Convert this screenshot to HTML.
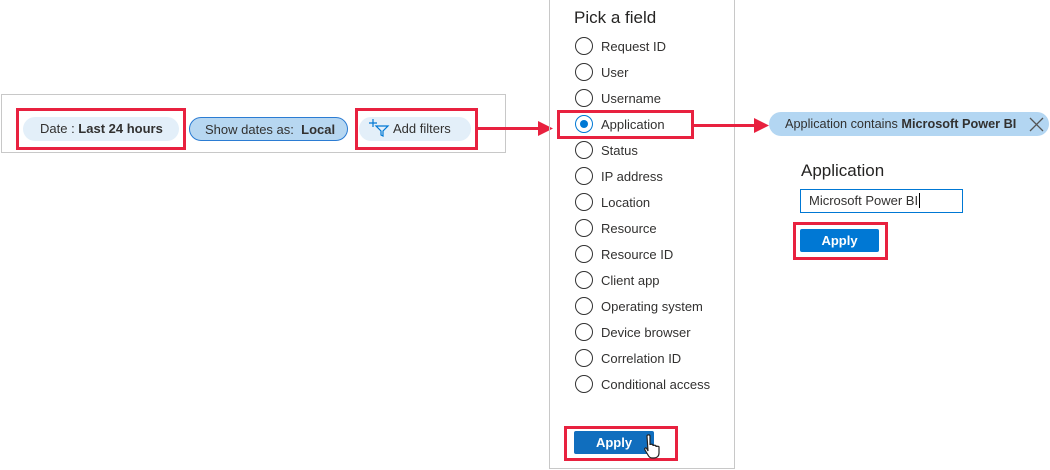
<!DOCTYPE html>
<html><head><meta charset="utf-8"><style>
body{margin:0;width:1050px;height:470px;background:#fff;position:relative;overflow:hidden;font-family:"Liberation Sans",sans-serif;color:#323130}
.a{position:absolute}
.pill{position:absolute;height:24px;border-radius:12px;font-size:13px;line-height:24px;box-sizing:border-box}
.red{position:absolute;border:3px solid #e8213f;box-sizing:border-box}
.rad{position:absolute;left:575px;width:18px;height:18px;border:1.5px solid #333;border-radius:50%;box-sizing:border-box}
.lab{position:absolute;left:601px;font-size:13px;line-height:16px}
.btn{position:absolute;color:#fff;font-weight:bold;font-size:13px;text-align:center;border-radius:2px}
</style></head><body>
<div class="a" style="left:1px;top:94px;width:505px;height:59px;border:1px solid #c8c8c8;box-sizing:border-box"></div>
<div class="pill" style="left:23px;top:117px;width:156px;background:#e3eff9;padding-left:17px">Date : <b>Last 24 hours</b></div>
<div class="red" style="left:16px;top:108px;width:170px;height:42px"></div>
<div class="pill" style="left:189px;top:117px;width:159px;background:#b7d7f1;border:1px solid #2b7cd3;padding-left:15px">Show dates as:&nbsp; <b>Local</b></div>
<div class="pill" style="left:359px;top:117px;width:112px;background:#e3eff9;padding-left:34px">Add filters</div>
<svg class="a" style="left:368px;top:118px" width="22" height="20"><path d="M1 5h8M5 1v8" stroke="#0078d4" stroke-width="1.2" fill="none"/><path d="M8 8h12l-5 5v5l-2 -1v-4z" stroke="#0078d4" stroke-width="1.2" fill="none"/></svg>
<div class="red" style="left:355px;top:108px;width:123px;height:42px"></div>
<div class="a" style="left:478px;top:127px;width:64px;height:3px;background:#e8213f"></div>
<svg class="a" style="left:538px;top:121px" width="16" height="15"><path d="M0 0L15 7.5L0 15z" fill="#e8213f"/></svg>

<div class="a" style="left:549px;top:-1px;width:186px;height:470px;border:1px solid #c8c8c8;box-sizing:border-box"></div>
<div class="a" style="left:574px;top:8px;font-size:17px;color:#252423">Pick a field</div>
<div class="rad" style="top:37px"></div><div class="lab" style="top:39px">Request ID</div>
<div class="rad" style="top:63px"></div><div class="lab" style="top:65px">User</div>
<div class="rad" style="top:89px"></div><div class="lab" style="top:91px">Username</div>
<div class="rad" style="top:115px;border-color:#0078d4"></div><div class="a" style="left:580px;top:120px;width:8px;height:8px;border-radius:50%;background:#0078d4"></div><div class="lab" style="top:117px">Application</div>
<div class="rad" style="top:141px"></div><div class="lab" style="top:143px">Status</div>
<div class="rad" style="top:167px"></div><div class="lab" style="top:169px">IP address</div>
<div class="rad" style="top:193px"></div><div class="lab" style="top:195px">Location</div>
<div class="rad" style="top:219px"></div><div class="lab" style="top:221px">Resource</div>
<div class="rad" style="top:245px"></div><div class="lab" style="top:247px">Resource ID</div>
<div class="rad" style="top:271px"></div><div class="lab" style="top:273px">Client app</div>
<div class="rad" style="top:297px"></div><div class="lab" style="top:299px">Operating system</div>
<div class="rad" style="top:323px"></div><div class="lab" style="top:325px">Device browser</div>
<div class="rad" style="top:349px"></div><div class="lab" style="top:351px">Correlation ID</div>
<div class="rad" style="top:375px"></div><div class="lab" style="top:377px">Conditional access</div>
<div class="red" style="left:557px;top:110px;width:137px;height:29px"></div>
<div class="a" style="left:694px;top:124px;width:62px;height:3px;background:#e8213f"></div>
<svg class="a" style="left:754px;top:118px" width="15" height="15"><path d="M0 0L15 7.5L0 15z" fill="#e8213f"/></svg>

<div class="btn" style="left:574px;top:431px;width:80px;height:23px;line-height:23px;background:#106ebe">Apply</div>
<div class="red" style="left:564px;top:426px;width:114px;height:35px"></div>
<svg class="a" style="left:643px;top:434px" width="22" height="28"><path d="M4 2c0-1.5 3-1.5 3 0v9c0-1 3-1 3 0v1c0-1 3-1 3 0v1c0-1 3-1 3 0v6c0 3-2 5-5 5h-2c-2 0-3-1-4-3l-3-5c-1-2 1-3 2-1l1 2z" fill="#fff" stroke="#222" stroke-width="1.2"/></svg>

<div class="pill" style="left:769px;top:112px;width:280px;background:#b3d6f2;padding-left:16px;color:#323130;font-size:12.7px">Application contains <b>Microsoft Power BI</b></div>
<svg class="a" style="left:1029px;top:117px" width="15" height="15"><path d="M1 1L14 14M14 1L1 14" stroke="#555" stroke-width="1.3"/></svg>
<div class="a" style="left:801px;top:161px;font-size:17px;color:#252423">Application</div>
<div class="a" style="left:800px;top:189px;width:163px;height:24px;border:1.5px solid #0078d4;box-sizing:border-box;font-size:13px;line-height:21px;padding-left:8px">Microsoft Power BI<span style="border-left:1px solid #000;margin-left:1px"></span></div>
<div class="btn" style="left:800px;top:229px;width:79px;height:23px;line-height:23px;background:#0078d4">Apply</div>
<div class="red" style="left:793px;top:222px;width:95px;height:38px"></div>
</body></html>
